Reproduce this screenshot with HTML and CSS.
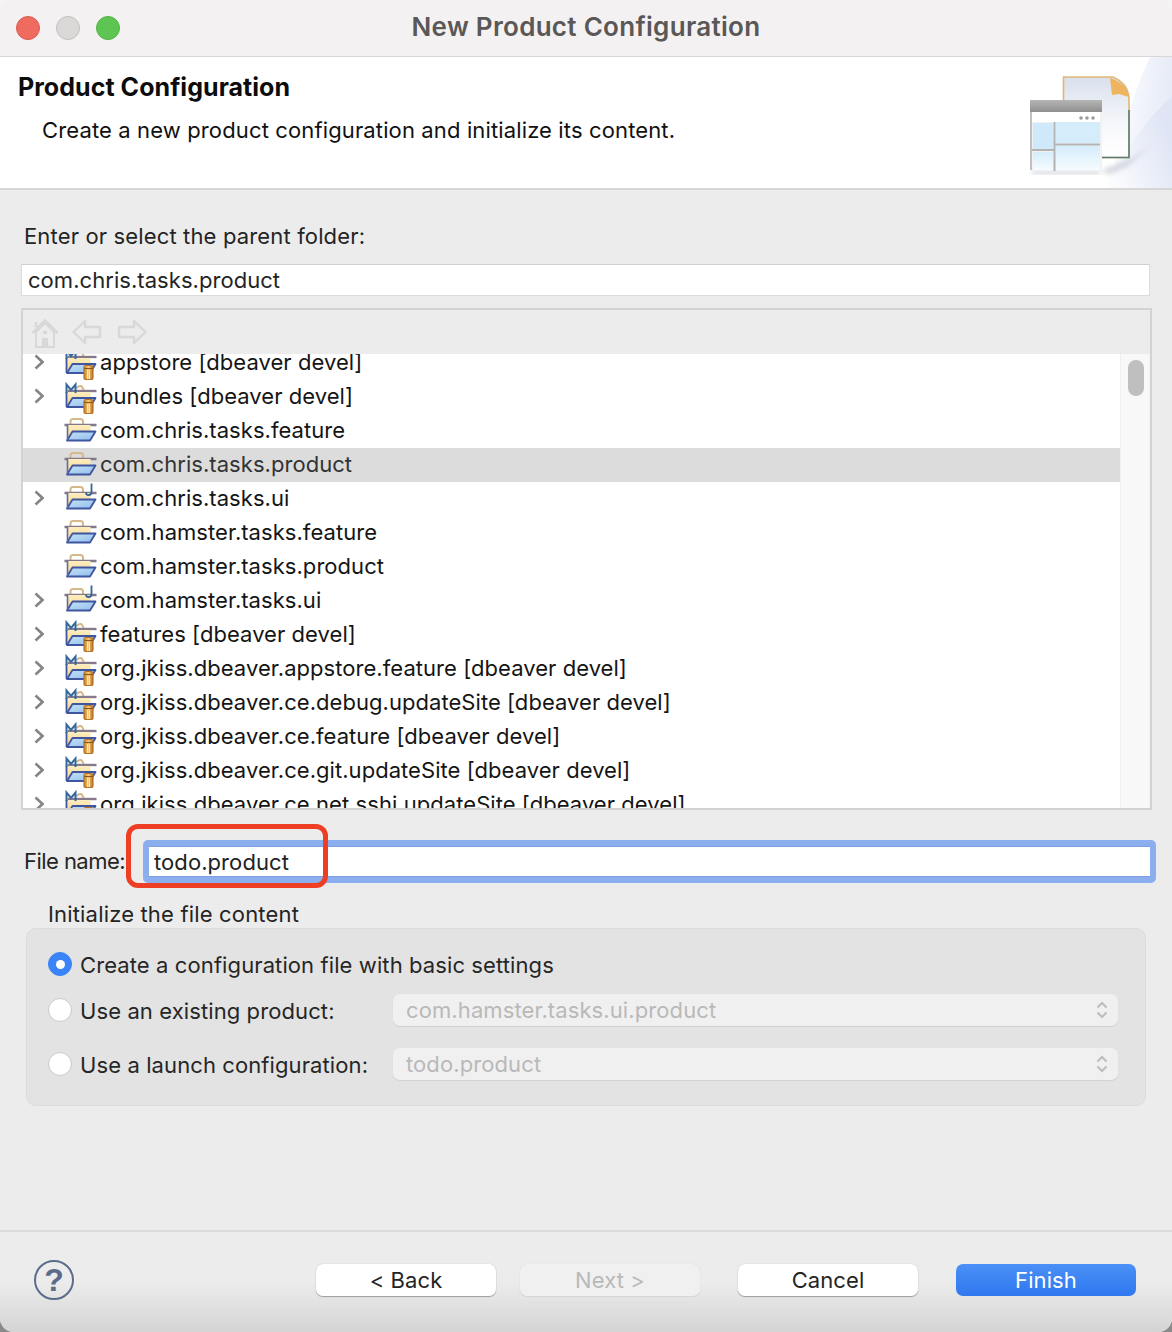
FILE: index.html
```html
<!DOCTYPE html>
<html lang="en">
<head>
<meta charset="utf-8">
<title>New Product Configuration</title>
<link rel="stylesheet" href="styles.css">
</head>
<body>
<svg class="defs" width="0" height="0" aria-hidden="true">
  <defs>
    <linearGradient id="fbody" x1="0" y1="0" x2="0" y2="1"><stop offset="0" stop-color="#fdeebf"/><stop offset="1" stop-color="#f3d28a"/></linearGradient>
    <linearGradient id="fflap" x1="0" y1="0" x2="1" y2="1"><stop offset="0" stop-color="#c6e3f8"/><stop offset="1" stop-color="#8fbdeb"/></linearGradient>
    <linearGradient id="cyl" x1="0" y1="0" x2="1" y2="0"><stop offset="0" stop-color="#c77f26"/><stop offset=".5" stop-color="#f6c878"/><stop offset="1" stop-color="#b86f1c"/></linearGradient>
    <symbol id="folder" viewBox="0 0 36 32" overflow="visible">
      <path d="M7 10V7.500Q7 5 9.500 5H17Q19.500 5 19.500 7.500V10" fill="none" stroke="#d6b98a" stroke-width="2"/>
      <path d="M1 11H33" stroke="#85798c" stroke-width="2.400"/>
      <rect x="4" y="11" width="23" height="15" fill="url(#fbody)"/>
      <path d="M3.500 26.500L9 17.500H32L26.500 26.500Z" fill="url(#fflap)" stroke="#3f559f" stroke-width="1.800" stroke-linejoin="round"/>
      <path d="M4 11V26" stroke="#5d6aa5" stroke-width="1.600"/>
    </symbol>
    <symbol id="mfolder" viewBox="0 0 36 32" overflow="visible">
      <path d="M13 8Q18 3 20 10" fill="none" stroke="#d6b98a" stroke-width="2"/>
      <path d="M4 11H33" stroke="#85798c" stroke-width="2.400"/>
      <rect x="3" y="12" width="24" height="15" fill="url(#fbody)"/>
      <path d="M3.500 27L9 18H32L26.500 27Z" fill="url(#fflap)" stroke="#3f559f" stroke-width="1.800" stroke-linejoin="round"/>
      <path d="M3 12V27" stroke="#3f559f" stroke-width="1.800"/>
      <path d="M3 13V4.500L7.500 10L12 4.500V13" fill="none" stroke="#33699f" stroke-width="2"/>
      <rect x="20.500" y="19.500" width="9" height="14" rx="2" fill="url(#cyl)" stroke="#b4732a" stroke-width="1.200"/>
      <path d="M20.500 22.500H29.500" stroke="#8d5618" stroke-width="1"/>
      <path d="M24 24V33M26 24V33" stroke="#fbe2b0" stroke-width="1"/>
    </symbol>
    <symbol id="jfolder" viewBox="0 0 36 32" overflow="visible">
      <use href="#folder" width="36" height="32"/>
      <path d="M28 1.500V10Q28 13 25 13Q22.500 13 22.500 10.500" fill="none" stroke="#34659b" stroke-width="1.800"/>
    </symbol>
    <symbol id="chev" viewBox="0 0 10 16"><path d="M1.500 1.500L8.500 8L1.500 14.500" fill="none" stroke="#868686" stroke-width="2.600"/></symbol>
  </defs>
</svg>
<div class="window">
  <div class="titlebar">
    <div class="lights">
      <span class="light light-red"></span>
      <span class="light light-grey"></span>
      <span class="light light-green"></span>
    </div>
    <div class="window-title">New Product Configuration</div>
  </div>

  <header class="banner">
    <div class="banner-text">
      <h1 class="banner-title">Product Configuration</h1>
      <p class="banner-sub">Create a new product configuration and initialize its content.</p>
    </div>
    <svg class="banner-art" viewBox="1028 57 144 131" width="144" height="131" aria-hidden="true">
      <defs>
        <linearGradient id="sw" x1="0" y1="0" x2="1" y2="0.200"><stop offset="0" stop-color="#fff"/><stop offset="1" stop-color="#e6ebf7"/></linearGradient>
        <linearGradient id="sw2" x1="0" y1="1" x2="1" y2="0.500"><stop offset="0" stop-color="#fff"/><stop offset="1" stop-color="#dfe5f5"/></linearGradient>
        <linearGradient id="page" x1="0" y1="0" x2="0" y2="1"><stop offset="0" stop-color="#d9e0ec"/><stop offset=".6" stop-color="#f7f8fb"/><stop offset="1" stop-color="#fff"/></linearGradient>
        <linearGradient id="pane" x1="0" y1="0" x2="0" y2="1"><stop offset="0" stop-color="#d5edfb"/><stop offset="1" stop-color="#f6fbff"/></linearGradient>
        <linearGradient id="band" x1="0" y1="0" x2="0" y2="1"><stop offset="0" stop-color="#b5b5b5"/><stop offset="1" stop-color="#8f8f8f"/></linearGradient>
        <filter id="blur1" x="-30%" y="-30%" width="160%" height="160%"><feGaussianBlur stdDeviation="2.500"/></filter>
        <filter id="soft"><feGaussianBlur stdDeviation=".5"/></filter>
      </defs>
      <path d="M1172 57V188H1110Q1125 110 1150 57Z" fill="url(#sw)"/>
      <path d="M1172 96V188H1104Q1135 130 1172 96Z" fill="url(#sw2)"/>
      <path d="M1102 170L1132 158L1150 146L1128 166L1108 175Z" fill="#b9bfcc" opacity=".6" filter="url(#blur1)"/>
      <path d="M1032 171H1100V174H1032Z" fill="#a8adb8" opacity=".6" filter="url(#blur1)"/>
      <g filter="url(#soft)">
        <path d="M1063.500 77H1113Q1129 84 1129 100V157.500H1063.500Z" fill="url(#page)" stroke="#dfb778" stroke-width="1.600"/>
        <path d="M1064 157.500H1129V110" fill="none" stroke="#5d7d7a" stroke-width="1.600"/>
        <path d="M1110 78Q1128 84 1129 97L1119 94L1112 95Z" fill="#efb45e"/>
        <rect x="1030" y="100" width="72" height="71" fill="#f1f2f4"/>
        <rect x="1030" y="100" width="72" height="12" fill="url(#band)"/>
        <rect x="1032" y="112" width="68" height="10" fill="#fff"/>
        <circle cx="1081" cy="118" r="1.800" fill="#9a9a9a"/><circle cx="1087" cy="118" r="1.800" fill="#9a9a9a"/><circle cx="1093" cy="118" r="1.800" fill="#9a9a9a"/>
        <rect x="1033" y="123" width="20" height="26" fill="#cfe9fa"/>
        <rect x="1033" y="152" width="20" height="18" fill="url(#pane)"/>
        <rect x="1056" y="122" width="44" height="21" fill="#d5edfb"/>
        <rect x="1056" y="146" width="44" height="24" fill="url(#pane)"/>
        <path d="M1054.500 122V171M1032 150H1054M1055 144.500H1100" stroke="#b3b3b3" stroke-width="2"/>
        <path d="M1031 112V170" stroke="#c0c0c0" stroke-width="2"/>
      </g>
    </svg>
  </header>

  <main class="content">
    <div class="field-label">Enter or select the parent folder:</div>
    <div class="text-input">com.chris.tasks.product</div>

    <section class="tree">
      <div class="tree-toolbar">
        <svg class="tb-icon tb-home" viewBox="0 0 28 32" width="28" height="32" aria-hidden="true">
          <path d="M1.500 16L14 3.500L26.500 16M5 5V10" fill="none" stroke="#d8d8d8" stroke-width="2.600"/>
          <path d="M5 15V30H23V15L14 6Z" fill="#ececec" stroke="#d8d8d8" stroke-width="2"/>
          <rect x="11" y="21" width="6" height="9" fill="#d8d8d8"/><rect x="12" y="14" width="4" height="3" fill="#d8d8d8"/>
        </svg>
        <svg class="tb-icon tb-back" viewBox="0 0 30 26" width="30" height="26" aria-hidden="true">
          <path d="M1.500 13L13 2V8H28V18H13V24Z" fill="#ececec" stroke="#d8d8d8" stroke-width="2.400" stroke-linejoin="round"/>
        </svg>
        <svg class="tb-icon tb-forward" viewBox="0 0 30 26" width="30" height="26" aria-hidden="true">
          <path d="M28.500 13L17 2V8H2V18H17V24Z" fill="#ececec" stroke="#d8d8d8" stroke-width="2.400" stroke-linejoin="round"/>
        </svg>
      </div>
      <div class="tree-body">
        <div class="tree-viewport">
          <ul class="tree-list">
            <li class="row"><svg class="chev"><use href="#chev"/></svg><svg class="ficon"><use href="#mfolder"/></svg><span>appstore [dbeaver devel]</span></li>
            <li class="row"><svg class="chev"><use href="#chev"/></svg><svg class="ficon"><use href="#mfolder"/></svg><span>bundles [dbeaver devel]</span></li>
            <li class="row"><span class="chev"></span><svg class="ficon"><use href="#folder"/></svg><span>com.chris.tasks.feature</span></li>
            <li class="row row-selected"><span class="chev"></span><svg class="ficon"><use href="#folder"/></svg><span>com.chris.tasks.product</span></li>
            <li class="row"><svg class="chev"><use href="#chev"/></svg><svg class="ficon"><use href="#jfolder"/></svg><span>com.chris.tasks.ui</span></li>
            <li class="row"><span class="chev"></span><svg class="ficon"><use href="#folder"/></svg><span>com.hamster.tasks.feature</span></li>
            <li class="row"><span class="chev"></span><svg class="ficon"><use href="#folder"/></svg><span>com.hamster.tasks.product</span></li>
            <li class="row"><svg class="chev"><use href="#chev"/></svg><svg class="ficon"><use href="#jfolder"/></svg><span>com.hamster.tasks.ui</span></li>
            <li class="row"><svg class="chev"><use href="#chev"/></svg><svg class="ficon"><use href="#mfolder"/></svg><span>features [dbeaver devel]</span></li>
            <li class="row"><svg class="chev"><use href="#chev"/></svg><svg class="ficon"><use href="#mfolder"/></svg><span>org.jkiss.dbeaver.appstore.feature [dbeaver devel]</span></li>
            <li class="row"><svg class="chev"><use href="#chev"/></svg><svg class="ficon"><use href="#mfolder"/></svg><span>org.jkiss.dbeaver.ce.debug.updateSite [dbeaver devel]</span></li>
            <li class="row"><svg class="chev"><use href="#chev"/></svg><svg class="ficon"><use href="#mfolder"/></svg><span>org.jkiss.dbeaver.ce.feature [dbeaver devel]</span></li>
            <li class="row"><svg class="chev"><use href="#chev"/></svg><svg class="ficon"><use href="#mfolder"/></svg><span>org.jkiss.dbeaver.ce.git.updateSite [dbeaver devel]</span></li>
            <li class="row"><svg class="chev"><use href="#chev"/></svg><svg class="ficon"><use href="#mfolder"/></svg><span>org.jkiss.dbeaver.ce.net.sshj.updateSite [dbeaver devel]</span></li>
          </ul>
        </div>
        <div class="scrollbar"><div class="thumb"></div></div>
      </div>
    </section>

    <div class="file-row">
      <label class="file-label">File name:</label>
      <div class="file-input">todo.product</div>
      <div class="callout"></div>
    </div>

    <div class="group-label">Initialize the file content</div>
    <section class="group">
      <div class="opt opt-first">
        <span class="radio radio-on"></span>
        <span class="opt-label">Create a configuration file with basic settings</span>
      </div>
      <div class="opt">
        <span class="radio"></span>
        <span class="opt-label">Use an existing product:</span>
        <div class="select"><span>com.hamster.tasks.ui.product</span>
          <svg class="updown" viewBox="0 0 12 18" width="12" height="18" aria-hidden="true"><path d="M1.500 6.500L6 2L10.500 6.500M1.500 11.500L6 16L10.500 11.500" fill="none" stroke="#bdbdbd" stroke-width="2"/></svg>
        </div>
      </div>
      <div class="opt opt-last">
        <span class="radio"></span>
        <span class="opt-label">Use a launch configuration:</span>
        <div class="select"><span>todo.product</span>
          <svg class="updown" viewBox="0 0 12 18" width="12" height="18" aria-hidden="true"><path d="M1.500 6.500L6 2L10.500 6.500M1.500 11.500L6 16L10.500 11.500" fill="none" stroke="#bdbdbd" stroke-width="2"/></svg>
        </div>
      </div>
    </section>
  </main>

  <footer class="footer">
    <div class="help">?</div>
    <div class="buttons">
      <button class="btn">&lt; Back</button>
      <button class="btn btn-disabled">Next &gt;</button>
      <button class="btn btn-cancel">Cancel</button>
      <button class="btn btn-primary">Finish</button>
    </div>
  </footer>
</div>
</body>
</html>
```

FILE: styles.css
```css
* { box-sizing: border-box; }
html, body { margin: 0; padding: 0; height: 1332px; overflow: hidden; }
body {
  background: linear-gradient(#f4f4f4 0 40px, #8a8a8a 1290px);
  font-family: Inter, "Liberation Sans", sans-serif;
  font-size: 22px;
  letter-spacing: .1px;
  color: #242424;
}
.defs { position: absolute; }
.window {
  width: 1172px; height: 1332px;
  border-radius: 14px;
  overflow: hidden;
  background: #ececec;
  display: flex; flex-direction: column;
}
.titlebar {
  height: 57px; flex: none;
  background: #f4f1f2;
  border-bottom: 1px solid #d8d6d6;
  display: flex; align-items: center;
  position: relative;
}
.lights { display: flex; gap: 16px; padding-left: 16px; margin-top: -1px; }
.light { width: 24px; height: 24px; border-radius: 50%; border: 1px solid transparent; }
.light-red { background: #ef6b60; border-color: #dc5a50; }
.light-grey { background: #dbd8d8; border-color: #c3c0c0; }
.light-green { background: #5fc552; border-color: #52b147; }
.window-title {
  position: absolute; left: 0; right: 0; top: 0; height: 56px;
  line-height: 54px; text-align: center;
  font-weight: 600; font-size: 26px; letter-spacing: .3px; color: #5a5757;
}
.banner {
  height: 133px; flex: none;
  background: #fff;
  border-bottom: 2px solid #d6d6d6;
  display: flex; justify-content: space-between;
}
.banner-title { margin: 15px 0 0 18px; font-size: 25px; line-height: 30px; font-weight: 700; letter-spacing: .05px; color: #0c0c0c; }
.banner-sub { margin: 13px 0 0 42px; font-size: 22px; line-height: 30px; letter-spacing: .13px; color: #111; }
.banner-art { display: block; flex: none; }

.content { flex: 1; padding-left: 21px; display: flex; flex-direction: column; align-items: flex-start; }
.field-label { margin: 31px 0 0 3px; height: 30px; line-height: 30px; letter-spacing: .15px; }
.text-input {
  margin-top: 13px; width: 1129px; height: 32px;
  background: #fff; border: 1px solid #dcdcdc; border-top-color: #d0d0d0;
  padding-left: 6px; line-height: 30px; letter-spacing: .05px;
}
.tree {
  margin-top: 12px; width: 1131px; height: 502px;
  border: 2px solid #d3d3d3;
  display: flex; flex-direction: column;
}
.tree-toolbar { height: 44px; flex: none; background: #ececec; display: flex; align-items: flex-start; }
.tb-icon { display: block; flex: none; }
.tb-home { margin: 7px 0 0 8px; }
.tb-back { margin: 9px 0 0 13px; }
.tb-forward { margin: 9px 0 0 15px; }
.tree-body { flex: 1; display: flex; min-height: 0; background: #fff; }
.tree-viewport { flex: 1; overflow: hidden; }
.tree-list { list-style: none; margin: -8px 0 0; padding: 0; }
.row {
  height: 34px; display: flex; align-items: center;
  padding: 0 0 2px 11px; white-space: nowrap; color: #151515; letter-spacing: .05px;
}
.row-selected { background: #dcdcdc; color: #333; }
.chev { width: 10px; height: 16px; margin-right: 19px; flex: none; display: block; }
.ficon { width: 37px; height: 32px; flex: none; display: block; overflow: visible; }
.scrollbar { width: 30px; flex: none; background: #f8f8f8; border-left: 1px solid #efefef; border-right: 1px solid #f2f2f2; }
.thumb { width: 16px; height: 36px; margin: 6px 0 0 7px; border-radius: 8px; background: #bfbfbf; }

.file-row { margin-top: 30px; width: 1135px; height: 44px; display: flex; align-items: flex-start; position: relative; }
.file-label { margin-left: 3px; width: 119px; flex: none; white-space: nowrap; line-height: 42px; letter-spacing: -.55px; }
.file-input {
  flex: 1; height: 43px;
  background: #fff;
  border: 6px solid #8aaeee;
  border-radius: 5px;
  box-shadow: inset 0 1px #7f9fde, inset 0 -1px #7f9fde;
  padding-left: 5px; line-height: 32px; color: #222; letter-spacing: .08px;
}
.callout {
  position: absolute; left: 105px; top: -16px;
  width: 202px; height: 64px;
  border: 5px solid #ee3f24; border-radius: 12px;
}
.group-label { margin: 16px 0 0 27px; height: 28px; line-height: 28px; letter-spacing: .17px; }
.group {
  margin: 0 0 0 5px; width: 1120px; height: 178px;
  background: #e3e3e3; border: 1px solid #dcdcdc; border-radius: 10px;
  padding: 19px 27px 0 21px;
  display: flex; flex-direction: column; gap: 14px;
}
.opt { height: 32px; display: flex; align-items: center; }
.opt-last { margin-top: 8px; }
.radio {
  width: 24px; height: 24px; border-radius: 50%; flex: none;
  background: #fff; border: 1px solid #c9c9c9;
  margin-right: 8px;
}
.radio-on { background: #3a84f7; border-color: #3a84f7; display: flex; align-items: center; justify-content: center; }
.radio-on::after { content: ""; width: 9px; height: 9px; border-radius: 50%; background: #fff; }
.opt-label { width: 313px; flex: none; white-space: nowrap; color: #262626; padding-top: 2px; }
.opt-first .opt-label { width: auto; }
.select {
  flex: 1; height: 32px;
  background: #f0f0f0; border-radius: 7px;
  box-shadow: 0 1px 1px #d0d0d0;
  display: flex; align-items: center; justify-content: space-between;
  padding: 0 10px 0 13px; color: #b9b9b9;
}
.footer {
  height: 102px; flex: none;
  border-top: 2px solid #dcdcdc;
  background: linear-gradient(#ececec 0 50%, #d4d4d4 100%);
  display: flex; align-items: flex-start;
  padding: 28px 0 0 34px;
}
.help {
  width: 40px; height: 40px; border-radius: 50%; flex: none;
  border: 2px solid #5b6b8c; color: #5b6b8c;
  font-family: "Liberation Sans", sans-serif;
  font-weight: 700; font-size: 32px; line-height: 36px; text-align: center;
}
.buttons { display: flex; margin: 4px 0 0 242px; gap: 24px; }
.btn {
  width: 180px; height: 32px; padding: 0;
  font: inherit; letter-spacing: inherit; color: #242424;
  background: #fff; border: 0; border-radius: 7px;
  box-shadow: 0 0 1px #bbb, 0 1px 1px #9a9a9a;
}
.btn-disabled { background: #f0f0f0; color: #b9b9b9; box-shadow: 0 0 1px #d0d0d0, 0 1px 1px #d4d4d4; }
.btn-cancel { margin-left: 14px; }
.btn-primary {
  margin-left: 14px; color: #fff;
  background: linear-gradient(#4a90f7, #2f78ee);
  box-shadow: none;
}
```
